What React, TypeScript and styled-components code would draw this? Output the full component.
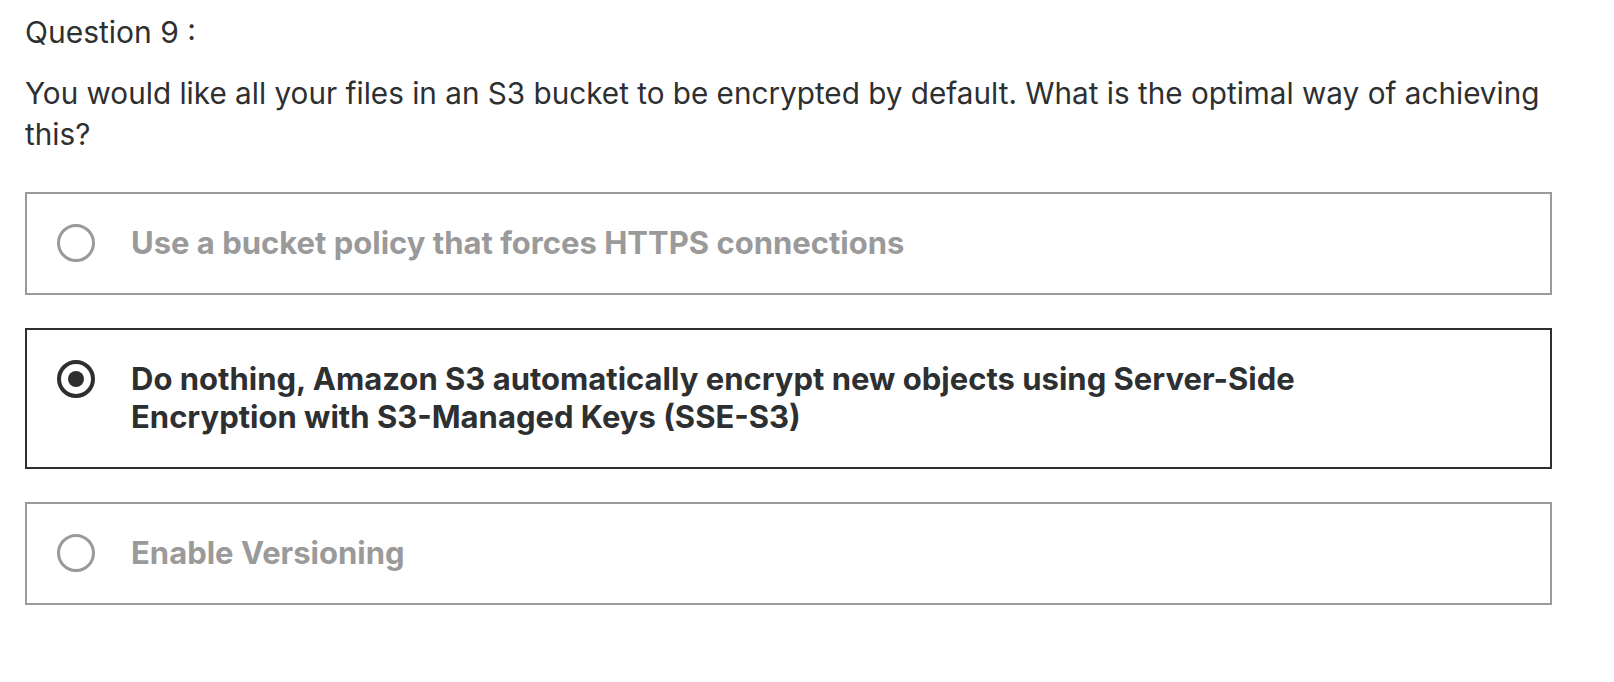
import React from "react"
import styled, { createGlobalStyle } from "styled-components"

const GlobalStyle = createGlobalStyle`
  html, body {
    margin: 0;
    padding: 0;
    background: #fff;
  }
  body {
    font-family: Inter, "Liberation Sans", Arial, sans-serif;
    color: #2d2f31;
  }
`

const Page = styled.div`
  width: 1527px;
  padding: 14px 0 0 25px;
`

const QuestionLabel = styled.div`
  font-size: 30px;
  line-height: 36px;
  font-weight: 400;
  margin-bottom: 23px;
`

const Prompt = styled.p`
  margin: 0 0 37px;
  font-size: 29.7px;
  line-height: 41px;
  font-weight: 400;
`

const Options = styled.div`
  display: flex;
  flex-direction: column;
  gap: 33.5px;
`

const Option = styled.label<{ $selected?: boolean }>`
  display: flex;
  align-items: flex-start;
  gap: 36px;
  padding: 30px 130px 30.5px 30px;
  border: 2px solid ${(p) => (p.$selected ? "#2d2f31" : "#9a9a9a")};
  cursor: pointer;
`

const Radio = styled.span<{ $selected?: boolean }>`
  flex: none;
  width: 38px;
  height: 38px;
  box-sizing: border-box;
  border-radius: 50%;
  border: ${(p) => (p.$selected ? "4px solid #2d2f31" : "3px solid #9a9a9a")};
  display: flex;
  align-items: center;
  justify-content: center;

  &::after {
    content: "";
    width: 16px;
    height: 16px;
    border-radius: 50%;
    background: #2d2f31;
    display: ${(p) => (p.$selected ? "block" : "none")};
  }
`

const OptionText = styled.span<{ $selected?: boolean }>`
  font-size: 31px;
  line-height: 38px;
  font-weight: 700;
  color: ${(p) => (p.$selected ? "#2d2f31" : "#9a9a9a")};
`

const answers = [
  { text: "Use a bucket policy that forces HTTPS connections", selected: false },
  {
    text: "Do nothing, Amazon S3 automatically encrypt new objects using Server-Side Encryption with S3-Managed Keys (SSE-S3)",
    selected: true,
  },
  { text: "Enable Versioning", selected: false },
]

const App = () => {
  return (
    <>
      <GlobalStyle />
      <Page>
        <QuestionLabel>Question 9 :</QuestionLabel>
        <Prompt>
          You would like all your files in an S3 bucket to be encrypted by default. What is the optimal way of
          achieving this?
        </Prompt>
        <Options>
          {answers.map((a) => (
            <Option key={a.text} $selected={a.selected}>
              <Radio $selected={a.selected} />
              <OptionText $selected={a.selected}>{a.text}</OptionText>
            </Option>
          ))}
        </Options>
      </Page>
    </>
  )
}

export default App
